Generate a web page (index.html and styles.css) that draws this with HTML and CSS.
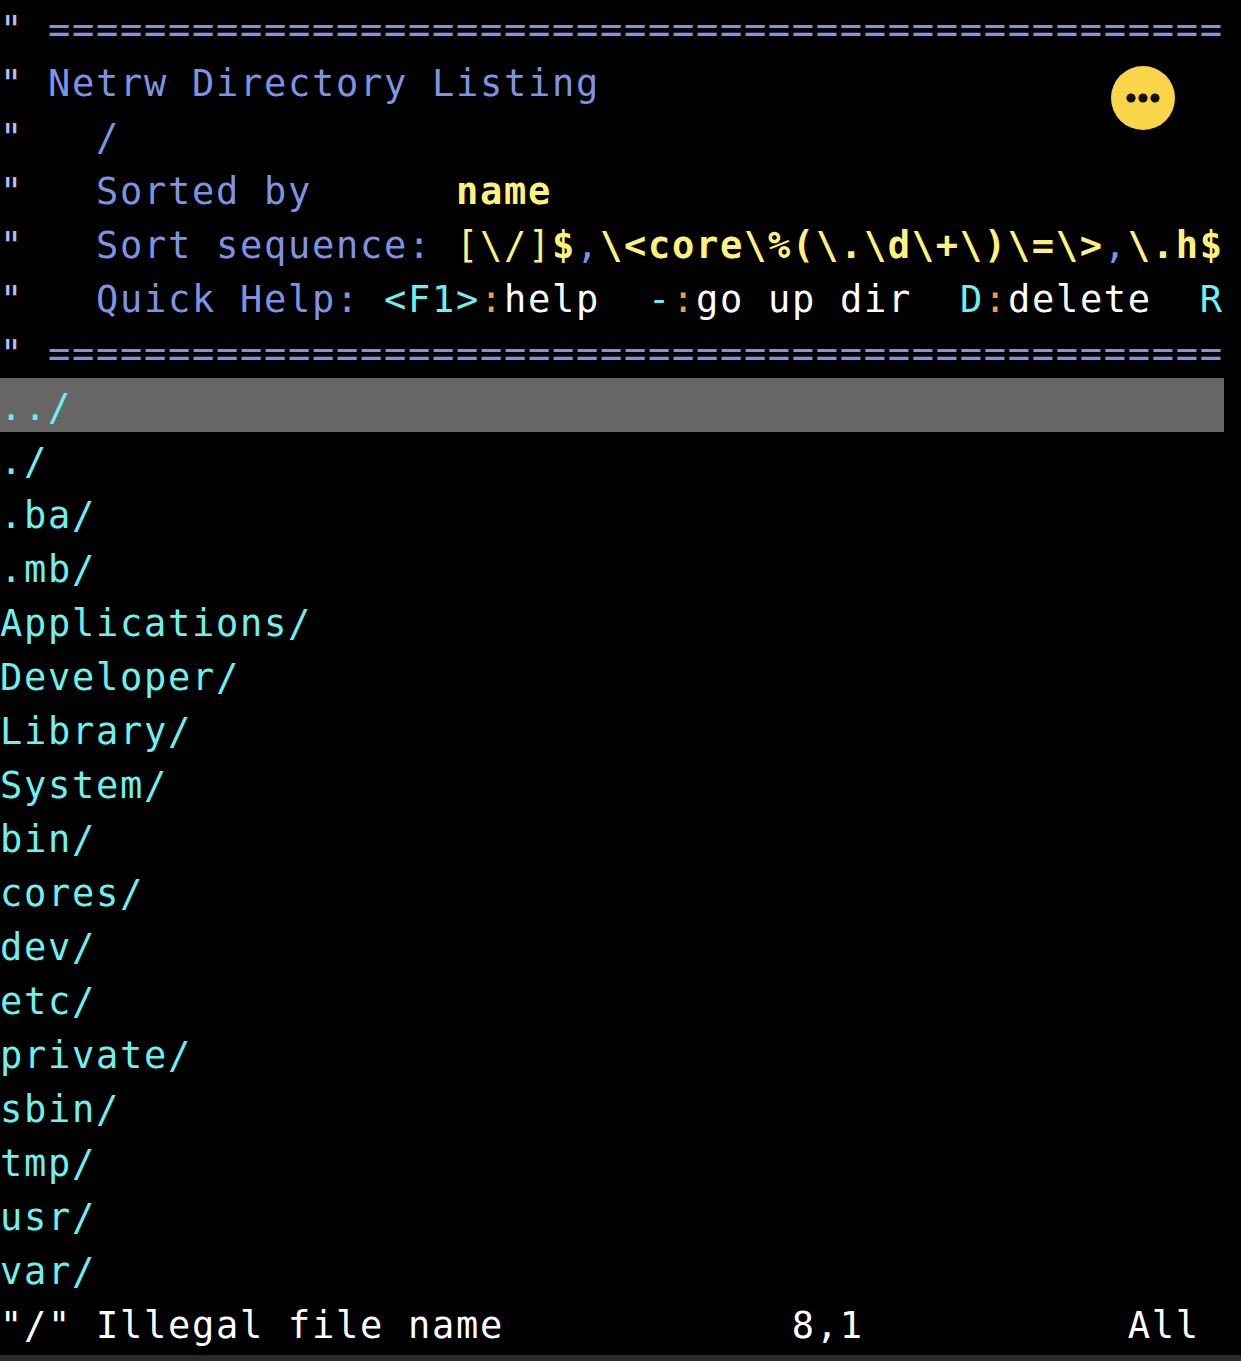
FILE: index.html
```html
<!DOCTYPE html>
<html lang="en">
<head>
<meta charset="utf-8">
<title>Netrw Directory Listing</title>
<link rel="stylesheet" href="styles.css">
</head>
<body>
<main class="term">
<div class="line"><span class="q">"</span><span class="c"> =================================================</span></div>
<div class="line"><span class="q">"</span><span class="c"> Netrw Directory Listing</span></div>
<div class="line"><span class="q">"</span><span class="c">   /</span></div>
<div class="line"><span class="q">"</span><span class="c">   Sorted by      </span><span class="y b">name</span></div>
<div class="line"><span class="q">"</span><span class="c">   Sort sequence: </span><span class="y">[\/]</span><span class="y b">$</span><span class="c">,</span><span class="y b">\&lt;core\%(\.\d\+\)\=\&gt;</span><span class="c">,</span><span class="y b">\.h$</span></div>
<div class="line"><span class="q">"</span><span class="c">   Quick Help: </span><span class="k">&lt;F1&gt;</span><span class="o">:</span><span class="w">help  </span><span class="k">-</span><span class="o">:</span><span class="w">go up dir  </span><span class="k">D</span><span class="o">:</span><span class="w">delete  </span><span class="k">R</span></div>
<div class="line"><span class="q">"</span><span class="c"> =================================================</span></div>
<div class="line cursor"><span class="k">../</span></div>
<div class="line k">./</div>
<div class="line k">.ba/</div>
<div class="line k">.mb/</div>
<div class="line k">Applications/</div>
<div class="line k">Developer/</div>
<div class="line k">Library/</div>
<div class="line k">System/</div>
<div class="line k">bin/</div>
<div class="line k">cores/</div>
<div class="line k">dev/</div>
<div class="line k">etc/</div>
<div class="line k">private/</div>
<div class="line k">sbin/</div>
<div class="line k">tmp/</div>
<div class="line k">usr/</div>
<div class="line k">var/</div>
<div class="line w">"/" Illegal file name            8,1           All</div>
</main>
<div class="strip"></div>
<button class="badge" type="button" aria-label="More">
<svg viewBox="0 0 64 64" width="64" height="64" aria-hidden="true"><circle cx="20" cy="32" r="4.6"/><circle cx="32" cy="32" r="4.6"/><circle cx="44" cy="32" r="4.6"/></svg>
</button>
</body>
</html>
```
FILE: styles.css
```css
* { box-sizing: border-box; }
html, body { margin: 0; padding: 0; height: 100%; background: #000; overflow: hidden; }
body { display: flex; flex-direction: column; position: relative; }
.term {
  width: 1224px;
  flex: 0 0 auto;
  font-family: "DejaVu Sans Mono", monospace;
  font-size: 37px;
  letter-spacing: 1.72px;
  color: #fff;
}
.line { height: 54px; padding-top: 6px; line-height: 48px; white-space: pre; overflow: hidden; }
.cursor { background: #666; }
.q { color: #b4bff0; }
.c { color: #7f93e4; }
.y { color: #fff27c; }
.b { font-weight: 700; }
.k { color: #6ff0ee; }
.o { color: #e8a23c; }
.w { color: #fff; }
.strip { margin-top: 5px; height: 6px; background: #2b2b2b; }
.badge {
  position: absolute;
  left: 1111px;
  top: 66px;
  width: 64px;
  height: 64px;
  padding: 0;
  border: 0;
  border-radius: 50%;
  background: #f9d548;
}
.badge svg { display: block; fill: #111; }
```
